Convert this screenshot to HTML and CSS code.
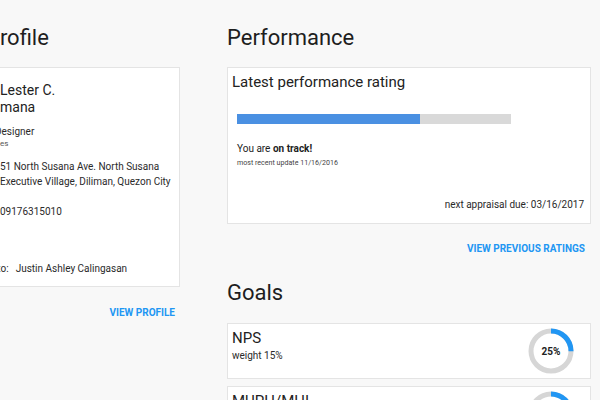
FILE: index.html
```html
<!DOCTYPE html>
<html lang="en">
<head>
<meta charset="utf-8">
<title>Dashboard</title>
<link rel="stylesheet" href="styles.css">
</head>
<body>
<div class="page">
  <section class="col col-left">
    <h2 class="section-title title-profile">Profile</h2>
    <div class="card profile-card">
      <div class="name">Lester C.<br>mana</div>
      <div class="role">Designer</div>
      <div class="dept">Sales</div>
      <div class="address">51 North Susana Ave. North Susana Executive Village, Diliman, Quezon City</div>
      <div class="phone">09176315010</div>
      <div class="reports"><span class="label">Reports to:</span><span class="value">Justin Ashley Calingasan</span></div>
    </div>
    <div class="link-row link-profile"><a class="link" href="#">VIEW PROFILE</a></div>
  </section>

  <section class="col col-right">
    <h2 class="section-title">Performance</h2>
    <div class="card perf-card">
      <div class="card-title">Latest performance rating</div>
      <div class="perf-body">
        <div class="bar"><div class="bar-fill" style="width:66.8%"></div></div>
        <div class="status">You are <b>on track!</b></div>
        <div class="updated">most recent update 11/16/2016</div>
      </div>
      <div class="due">next appraisal due: 03/16/2017</div>
    </div>
    <div class="link-row link-ratings"><a class="link" href="#">VIEW PREVIOUS RATINGS</a></div>

    <h2 class="section-title goals-title">Goals</h2>
    <div class="goal-list">
      <div class="card goal-card">
        <div class="goal-info">
          <div class="card-title">NPS</div>
          <div class="goal-weight">weight 15%</div>
        </div>
        <div class="donut">
          <svg width="46" height="46" viewBox="0 0 46 46">
            <circle cx="23" cy="23" r="20" fill="none" stroke="#d6d6d6" stroke-width="5"/>
            <circle cx="23" cy="23" r="20" fill="none" stroke="#2196f3" stroke-width="5" stroke-dasharray="31.42 125.66" transform="rotate(-90 23 23)"/>
          </svg>
          <span class="donut-label">25%</span>
        </div>
      </div>
      <div class="card goal-card">
        <div class="goal-info">
          <div class="card-title">MUPH/MHI</div>
          <div class="goal-weight">weight 20%</div>
        </div>
        <div class="donut">
          <svg width="46" height="46" viewBox="0 0 46 46">
            <circle cx="23" cy="23" r="20" fill="none" stroke="#d6d6d6" stroke-width="5"/>
            <circle cx="23" cy="23" r="20" fill="none" stroke="#2196f3" stroke-width="5" stroke-dasharray="37.7 125.66" transform="rotate(-90 23 23)"/>
          </svg>
          <span class="donut-label">30%</span>
        </div>
      </div>
    </div>
  </section>
</div>
</body>
</html>
```

FILE: styles.css
```css
html, body {
  margin: 0;
  padding: 0;
  overflow: hidden;
}

body {
  background: #f8f8f8;
  font-family: Roboto, "Liberation Sans", Arial, sans-serif;
  color: #222;
  width: 600px;
  height: 400px;
}

.page {
  display: flex;
  gap: 47px;
  margin-left: -6px;
  padding-top: 25px;
}

.col-left {
  width: 186px;
  flex: none;
}

.col-right {
  width: 364px;
  flex: none;
}

.section-title {
  margin: 0 0 16px 0;
  font-size: 22px;
  line-height: 26px;
  font-weight: 400;
  color: #1e1e1e;
}

.title-profile {
  margin-left: -8px;
}

.card {
  background: #fff;
  border: 1px solid #e4e4e4;
  box-sizing: border-box;
}

/* Profile card */
.profile-card {
  height: 220px;
  padding: 5px 6px 0 5px;
  font-size: 10px;
  color: #2a2a2a;
}

.name {
  margin-top: 9px;
  font-size: 14px;
  line-height: 16.5px;
  color: #222;
}

.role {
  margin-top: 10px;
  margin-left: -5px;
  line-height: 13px;
}

.dept {
  margin-left: -11px;
  font-size: 8px;
  line-height: 11px;
  color: #555;
}

.address {
  margin-top: 11px;
  line-height: 14.6px;
}

.phone {
  margin-top: 16px;
  line-height: 14px;
}

.reports {
  margin-top: 42.5px;
  margin-left: -40px;
  line-height: 14px;
  white-space: nowrap;
}

.reports .value {
  margin-left: 7px;
}

.link-row {
  display: flex;
  justify-content: flex-end;
  padding-right: 6px;
}

.link {
  font-size: 10px;
  line-height: 14px;
  font-weight: 700;
  color: #2196f3;
  text-decoration: none;
}

.link-profile {
  margin-top: 19px;
  padding-right: 5px;
}

/* Performance card */
.perf-card {
  height: 157px;
  padding: 5px 6px 0 4px;
}

.card-title {
  font-size: 15px;
  line-height: 18px;
  color: #222;
}

.perf-body {
  padding-left: 5px;
}

.bar {
  margin-top: 23px;
  width: 274px;
  height: 10px;
  background: #d9d9d9;
}

.bar-fill {
  height: 100%;
  background: #4a90e2;
}

.status {
  margin-top: 18px;
  font-size: 10px;
  line-height: 14px;
  color: #222;
}

.updated {
  font-size: 7.1px;
  line-height: 13px;
  color: #444;
}

.due {
  margin-top: 29px;
  text-align: right;
  font-size: 10px;
  line-height: 14px;
  color: #2a2a2a;
}

.link-ratings {
  margin-top: 17.5px;
}

.goals-title {
  margin-top: 24.5px;
  margin-bottom: 17px;
}

/* Goals */
.goal-list {
  display: flex;
  flex-direction: column;
  gap: 7px;
}

.goal-card {
  height: 56px;
  padding: 5px 16px 0 4px;
  display: flex;
  justify-content: space-between;
  align-items: flex-start;
}

.goal-weight {
  margin-top: 1.5px;
  font-size: 10px;
  line-height: 14px;
  color: #2a2a2a;
}

.donut {
  position: relative;
  width: 46px;
  height: 46px;
  margin-top: -1px;
}

.donut svg {
  display: block;
}

.donut-label {
  position: absolute;
  inset: 0;
  display: flex;
  align-items: center;
  justify-content: center;
  font-size: 10px;
  font-weight: 700;
  color: #222;
}
```
